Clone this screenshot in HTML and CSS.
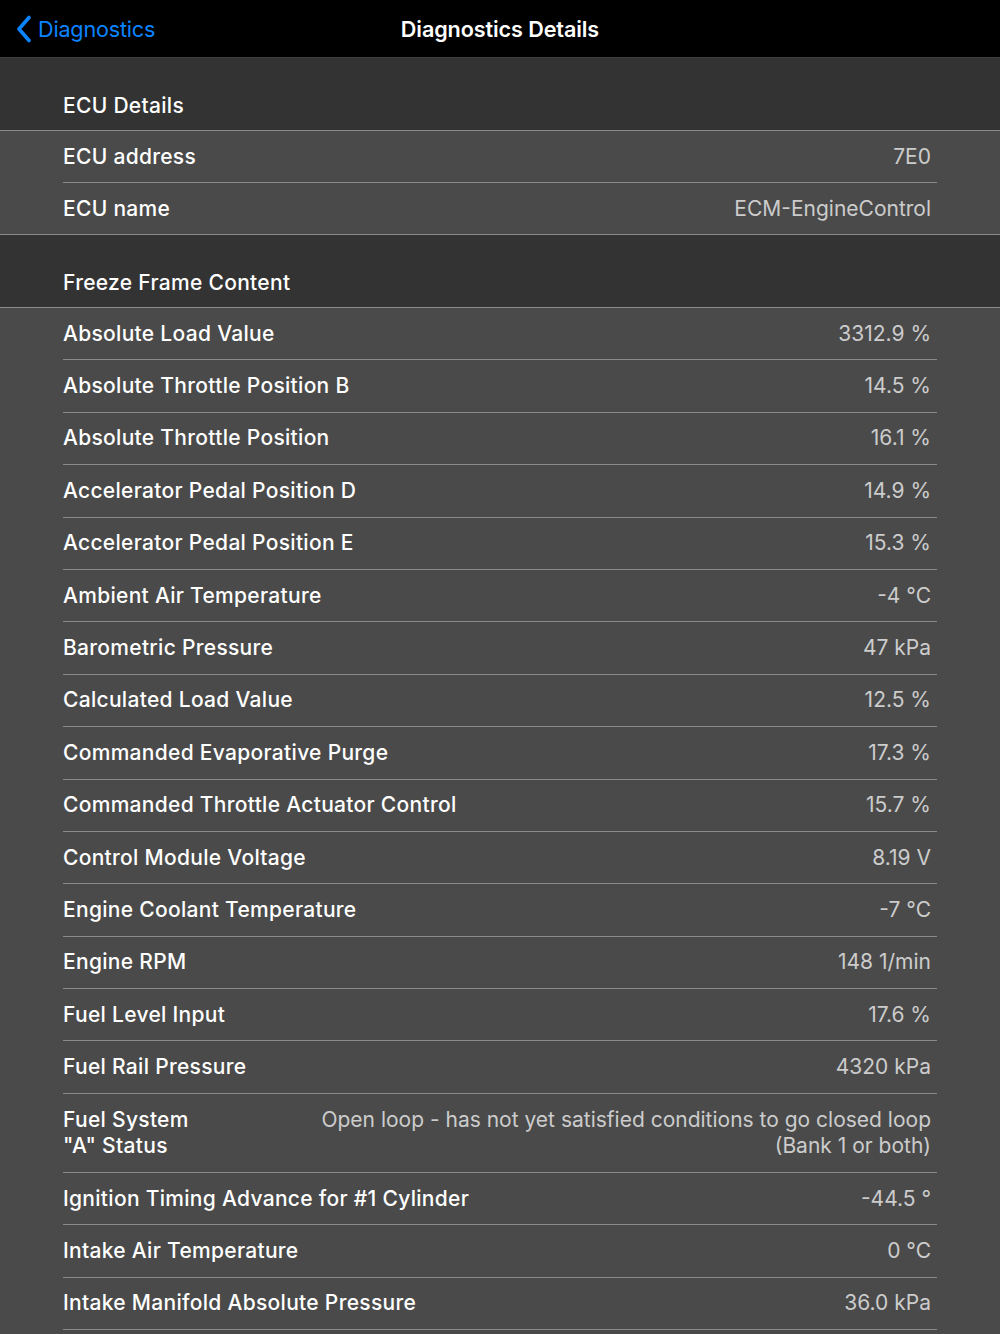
FILE: index.html
```html
<!DOCTYPE html>
<html lang="en">
<head>
    <meta charset="UTF-8">
    <meta name="viewport" content="width=device-width, initial-scale=1.0">
    <title>Diagnostics Details</title>
    <link rel="stylesheet" href="styles.css">
</head>
<body>
    <header class="nav-bar">
        <a class="back-button" href="#">
            <svg class="chevron" width="16" height="28" viewBox="0 0 16 28">
                <polyline points="13,2.5 3,14 13,25.5" fill="none" stroke="#0a84ff" stroke-width="3.6" stroke-linecap="round" stroke-linejoin="round"/>
            </svg>
            <span>Diagnostics</span>
        </a>
        <div class="nav-title">Diagnostics Details</div>
    </header>

    <!-- ECU section -->
    <div class="section-header">ECU Details</div>
    <div class="section ecu">
        <div class="row"><div class="row-inner"><span class="label">ECU address</span><span class="value">7E0</span></div></div>
        <div class="row last"><div class="row-inner"><span class="label">ECU name</span><span class="value">ECM-EngineControl</span></div></div>
    </div>

    <!-- Freeze frame section -->
    <div class="section-header">Freeze Frame Content</div>
    <div class="section">
        <div class="row"><div class="row-inner"><span class="label">Absolute Load Value</span><span class="value">3312.9 %</span></div></div>
        <div class="row"><div class="row-inner"><span class="label">Absolute Throttle Position B</span><span class="value">14.5 %</span></div></div>
        <div class="row"><div class="row-inner"><span class="label">Absolute Throttle Position</span><span class="value">16.1 %</span></div></div>
        <div class="row"><div class="row-inner"><span class="label">Accelerator Pedal Position D</span><span class="value">14.9 %</span></div></div>
        <div class="row"><div class="row-inner"><span class="label">Accelerator Pedal Position E</span><span class="value">15.3 %</span></div></div>
        <div class="row"><div class="row-inner"><span class="label">Ambient Air Temperature</span><span class="value">-4 °C</span></div></div>
        <div class="row"><div class="row-inner"><span class="label">Barometric Pressure</span><span class="value">47 kPa</span></div></div>
        <div class="row"><div class="row-inner"><span class="label">Calculated Load Value</span><span class="value">12.5 %</span></div></div>
        <div class="row"><div class="row-inner"><span class="label">Commanded Evaporative Purge</span><span class="value">17.3 %</span></div></div>
        <div class="row"><div class="row-inner"><span class="label">Commanded Throttle Actuator Control</span><span class="value">15.7 %</span></div></div>
        <div class="row"><div class="row-inner"><span class="label">Control Module Voltage</span><span class="value">8.19 V</span></div></div>
        <div class="row"><div class="row-inner"><span class="label">Engine Coolant Temperature</span><span class="value">-7 °C</span></div></div>
        <div class="row"><div class="row-inner"><span class="label">Engine RPM</span><span class="value">148 1/min</span></div></div>
        <div class="row"><div class="row-inner"><span class="label">Fuel Level Input</span><span class="value">17.6 %</span></div></div>
        <div class="row"><div class="row-inner"><span class="label">Fuel Rail Pressure</span><span class="value">4320 kPa</span></div></div>
        <div class="row tall"><div class="row-inner"><span class="label">Fuel System<br>"A" Status</span><span class="value">Open loop - has not yet satisfied conditions to go closed loop<br>(Bank 1 or both)</span></div></div>
        <div class="row"><div class="row-inner"><span class="label">Ignition Timing Advance for #1 Cylinder</span><span class="value">-44.5 °</span></div></div>
        <div class="row"><div class="row-inner"><span class="label">Intake Air Temperature</span><span class="value">0 °C</span></div></div>
        <div class="row"><div class="row-inner"><span class="label">Intake Manifold Absolute Pressure</span><span class="value">36.0 kPa</span></div></div>
    </div>
</body>
</html>
```

FILE: styles.css
```css
/* General styles */
html {
    background-color: #4a4a4a;
}

body {
    font-family: Inter, "Noto Sans", sans-serif;
    margin: 0;
    padding: 0;
    color: #fff;
}

/* Navigation bar */
.nav-bar {
    position: relative;
    height: 57px;
    background-color: #000;
    border-bottom: 1px solid #3c3c3c;
    display: flex;
    align-items: center;
    justify-content: center;
}

.back-button {
    position: absolute;
    left: 16px;
    top: 0;
    height: 57px;
    display: flex;
    align-items: center;
    gap: 6px;
    color: #0a84ff;
    text-decoration: none;
    font-size: 21.6px;
    letter-spacing: -0.2px;
}

.chevron {
    display: block;
}

.nav-title {
    font-size: 21.6px;
    font-weight: 600;
    letter-spacing: -0.1px;
}

/* Sections */
.section-header {
    height: 73px;
    box-sizing: border-box;
    padding: 0 0 12px 63px;
    display: flex;
    align-items: flex-end;
    background-color: #333;
    border-bottom: 1px solid #8a8a8a;
    font-size: 21px;
    font-weight: 500;
    letter-spacing: 0.3px;
}

.section {
    background-color: #4a4a4a;
}

.row {
    padding-left: 63px;
}

.row-inner {
    box-sizing: border-box;
    height: 52.4px;
    margin-right: 63px;
    padding-right: 6px;
    display: flex;
    align-items: center;
    justify-content: space-between;
    border-bottom: 1px solid #8a8a8a;
}

.section.ecu .row-inner {
    height: 52px;
}

.row.last {
    border-bottom: 1px solid #8a8a8a;
}

.section.ecu .row.last .row-inner {
    border-bottom: none;
    height: 51px;
}

.row.tall .row-inner {
    height: 79px;
}

.label {
    font-size: 21px;
    font-weight: 500;
    letter-spacing: 0.3px;
    line-height: 26px;
    white-space: nowrap;
}

.value {
    font-size: 21px;
    font-weight: 400;
    color: #cccccc;
    text-align: right;
    line-height: 26px;
}
```
